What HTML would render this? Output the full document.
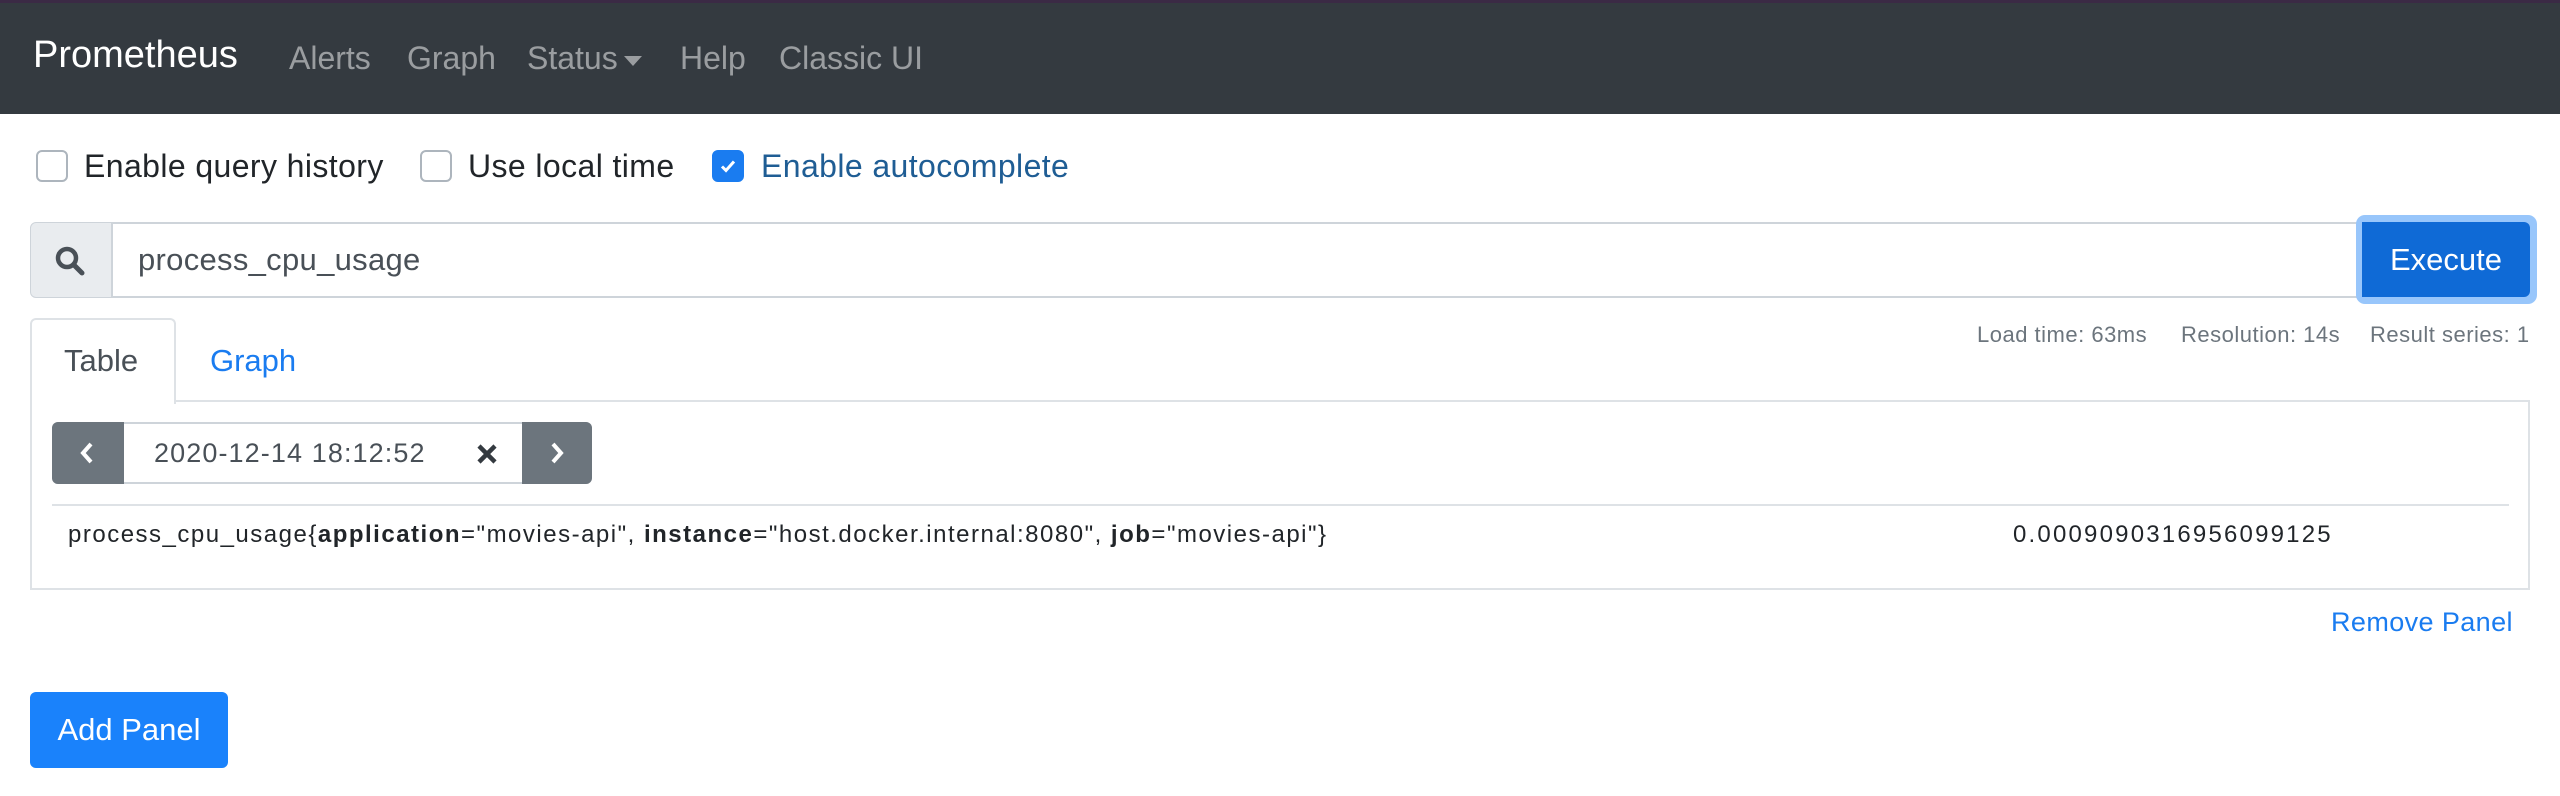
<!DOCTYPE html>
<html><head><meta charset="utf-8"><style>
*{box-sizing:border-box;margin:0;padding:0}
body{width:2560px;height:796px;background:#fff;font-family:"Liberation Sans",Arial,sans-serif;color:#212529;position:relative;overflow:hidden}
.a{position:absolute;white-space:nowrap}
.nav{left:0;top:0;width:2560px;height:114px;background:#343a40;border-top:3px solid #3b2a45}
.nl{color:rgba(255,255,255,.5);font-size:32px;top:40px}
.cb{width:32px;height:32px;border:2px solid #adb5bd;border-radius:6px;background:#fff;top:150px}
.lbl{font-size:32px;top:148px;letter-spacing:.4px}
</style></head><body>
<div class="a nav"></div>
<div class="a" style="left:33px;top:34px;font-size:38px;color:#fff">Prometheus</div>
<div class="a nl" style="left:289px">Alerts</div>
<div class="a nl" style="left:407px">Graph</div>
<div class="a nl" style="left:527px">Status<span style="display:inline-block;width:0;height:0;border-left:9px solid transparent;border-right:9px solid transparent;border-top:10px solid rgba(255,255,255,.5);vertical-align:middle;margin-left:6px"></span></div>
<div class="a nl" style="left:680px">Help</div>
<div class="a nl" style="left:779px">Classic UI</div>

<div class="a cb" style="left:36px"></div>
<div class="a lbl" style="left:84px">Enable query history</div>
<div class="a cb" style="left:420px"></div>
<div class="a lbl" style="left:468px">Use local time</div>
<div class="a cb" style="left:712px;background:#1a7cf0;border-color:#1a7cf0"><svg width="28" height="28" viewBox="0 0 28 28" style="position:absolute;left:0;top:0"><path d="M8 14.5l4 4 8-9" stroke="#fff" stroke-width="3" fill="none"/></svg></div>
<div class="a lbl" style="left:761px;color:#1f5d94">Enable autocomplete</div>

<div class="a" style="left:30px;top:222px;width:2334px;height:76px;border:2px solid #ced4da;border-radius:6px 0 0 6px"></div>
<div class="a" style="left:31px;top:223px;width:82px;height:74px;background:#e9ecef;border-right:2px solid #ced4da;border-radius:5px 0 0 5px"></div>
<svg class="a" style="left:54px;top:245px" width="32" height="32" viewBox="0 0 32 32"><circle cx="13" cy="13" r="9" stroke="#495057" stroke-width="4.5" fill="none"/><path d="M20 20l8 8" stroke="#495057" stroke-width="5" stroke-linecap="round"/></svg>
<div class="a" style="left:138px;top:242px;font-size:31px;color:#495057;letter-spacing:.3px">process_cpu_usage</div>
<div class="a" style="left:2356px;top:215px;width:181px;height:89px;border-radius:9px;background:#98c6fb"></div>
<div class="a" style="left:2362px;top:222px;width:168px;height:75px;background:#0f6ad6;border-radius:0 6px 6px 0;color:#fff;font-size:31px;text-align:center;line-height:75px">Execute</div>

<div class="a" style="left:1977px;top:322px;font-size:22px;color:#6c757d;letter-spacing:.5px">Load time: 63ms</div>
<div class="a" style="left:2181px;top:322px;font-size:22px;color:#6c757d;letter-spacing:.5px">Resolution: 14s</div>
<div class="a" style="left:2370px;top:322px;font-size:22px;color:#6c757d;letter-spacing:.5px">Result series: 1</div>

<div class="a" style="left:30px;top:400px;width:2500px;height:190px;border:2px solid #dee2e6;border-top:none"></div>
<div class="a" style="left:175px;top:400px;width:2355px;height:2px;background:#dee2e6"></div>
<div class="a" style="left:30px;top:318px;width:146px;height:86px;border:2px solid #dee2e6;border-bottom:none;border-radius:6px 6px 0 0;background:#fff"></div>
<div class="a" style="left:64px;top:343px;font-size:31px;color:#495057">Table</div>
<div class="a" style="left:210px;top:343px;font-size:31px;color:#1a7cf0">Graph</div>

<div class="a" style="left:52px;top:422px;width:540px;height:62px;border:2px solid #ced4da;border-radius:6px;background:#fff"></div>
<div class="a" style="left:52px;top:422px;width:72px;height:62px;background:#6c757d;border-radius:6px 0 0 6px"></div>
<svg class="a" style="left:78px;top:441px" width="20" height="24" viewBox="0 0 20 24"><path d="M13 3L5 12l8 9" stroke="#fff" stroke-width="4" fill="none"/></svg>
<div class="a" style="left:154px;top:438px;font-size:27px;color:#495057;letter-spacing:1.1px">2020-12-14 18:12:52</div>
<svg class="a" style="left:476px;top:443px" width="22" height="22" viewBox="0 0 22 22"><path d="M3 3l16 16M19 3L3 19" stroke="#343a40" stroke-width="4.5"/></svg>
<div class="a" style="left:522px;top:422px;width:70px;height:62px;background:#6c757d;border-radius:0 6px 6px 0"></div>
<svg class="a" style="left:547px;top:441px" width="20" height="24" viewBox="0 0 20 24"><path d="M6 3l8 9-8 9" stroke="#fff" stroke-width="4" fill="none"/></svg>

<div class="a" style="left:52px;top:504px;width:2457px;height:2px;background:#dee2e6"></div>
<div class="a" style="left:68px;top:521px;font-size:24px;color:#212529;letter-spacing:1.5px">process_cpu_usage{<b>application</b>="movies-api", <b>instance</b>="host.docker.internal:8080", <b>job</b>="movies-api"}</div>
<div class="a" style="left:2013px;top:521px;font-size:24px;color:#212529;letter-spacing:2.2px">0.0009090316956099125</div>

<div class="a" style="left:2331px;top:607px;font-size:27px;color:#1a7cf0;letter-spacing:.4px">Remove Panel</div>
<div class="a" style="left:30px;top:692px;width:198px;height:76px;background:#1a82fb;border-radius:6px;color:#fff;font-size:31px;text-align:center;line-height:76px">Add Panel</div>
</body></html>
